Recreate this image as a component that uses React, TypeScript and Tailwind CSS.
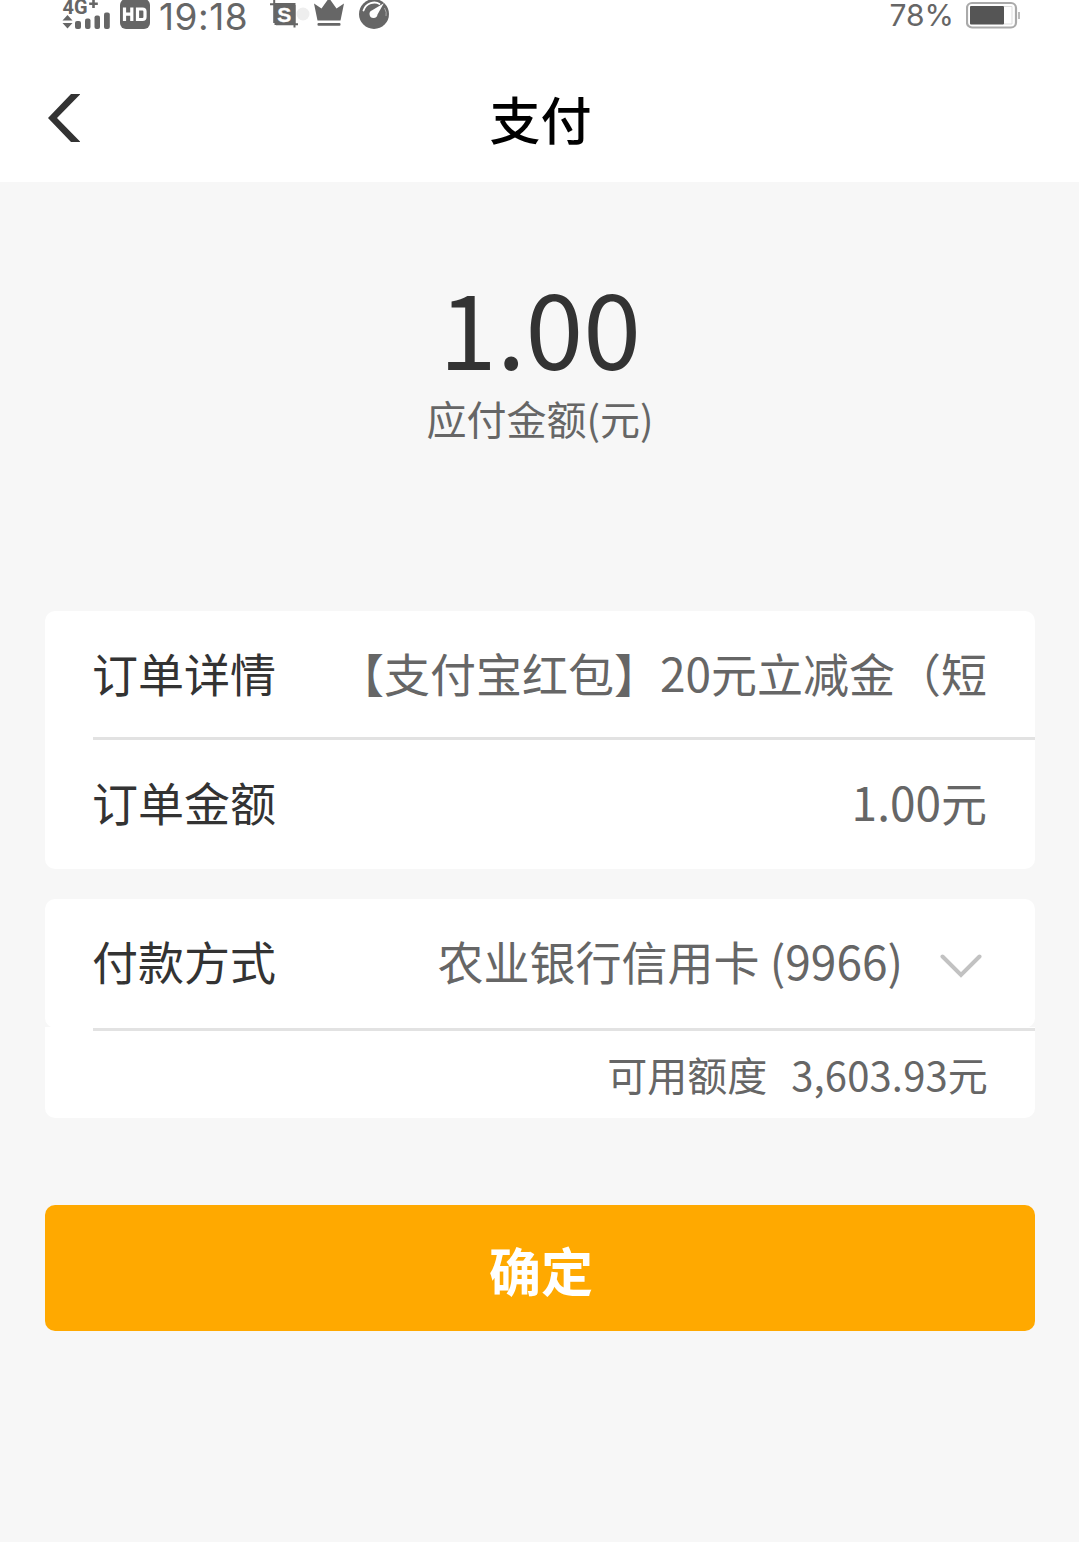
import type { ReactNode } from "react";

function SignalIcon() {
  return (
    <svg className="w-[50px] h-8 shrink-0" viewBox="0 0 50 32" fill="#666">
      <text x="0.5" y="14" fontFamily="Roboto, sans-serif" fontWeight="700" fontSize="20" textLength="25" lengthAdjust="spacingAndGlyphs">4G</text>
      <path d="M30.200 0h2.600v2.500h3v2.400h-3v3h-2.600v-3h-3V2.500h3z" />
      <path d="M0.500 20.500 5.500 15l5 5.500zM0.500 23h10l-5 5.500z" />
      <rect x="13" y="21" width="6" height="8" rx="2" />
      <rect x="23" y="18.500" width="5.500" height="10.500" rx="2" />
      <rect x="32.500" y="15.500" width="5.500" height="13.500" rx="2" />
      <rect x="42" y="12.500" width="5.800" height="16.500" rx="2" />
    </svg>
  );
}

function HdIcon() {
  return (
    <svg className="ml-2 w-[30px] h-8 shrink-0" viewBox="0 0 30 32">
      <rect y="-1" width="30" height="30" rx="6" fill="#666" />
      <path d="M4.500 7.500v13.500M11.800 7.500v13.500M4.500 14.200h7.300M17.500 9h5q2.500 0 2.500 2.500v5.500q0 2.500-2.500 2.500h-5z" fill="none" stroke="#fff" strokeWidth="3.200" />
    </svg>
  );
}

function StatusIcons() {
  return (
    <svg className="ml-[22px] w-[122px] h-8 shrink-0" viewBox="0 0 122 32">
      <circle cx="33" cy="14" r="6.500" fill="#eee" />
      <path d="M4.500 3h21v22H4.500z" fill="#666" />
      <path d="M-1 4.200h24M4.200 0v23M6 24.300h22M24.500 5v22.500" fill="none" stroke="#666" strokeWidth="2" />
      <text x="14.300" y="21.500" textAnchor="middle" fill="#fff" stroke="#fff" strokeWidth="0.300" fontFamily="Liberation Sans, sans-serif" fontWeight="700" fontSize="21">S</text>
      <path d="M44 3.500 51.500 8.500 59 -2 66.500 8.500 74 3.500 70.500 20.500H47.500z" fill="#666" />
      <rect x="47.500" y="23" width="23" height="2.800" rx="1" fill="#666" />
      <circle cx="104" cy="14" r="15" fill="#666" />
      <path d="M93.500 10.500C96 2.500 105 1 109.500 4" fill="none" stroke="#fff" strokeWidth="1.800" strokeLinecap="round" />
      <path d="M113.800 3.200 107.500 14.500a4 4 0 1 1-5.300-4.200z" fill="#fff" />
      <path d="M114.500 8q2.500 4.500 1.500 8" fill="none" stroke="#aaa" strokeWidth="1" />
    </svg>
  );
}

function BatteryIcon() {
  return (
    <svg className="w-14 h-8 shrink-0" viewBox="0 0 56 32">
      <rect x="1" y="3" width="49" height="24.500" rx="5" fill="#fff" stroke="#aaa" strokeWidth="2.200" />
      <rect x="4" y="6" width="34" height="18.500" rx="1" fill="#555" />
      <path d="M38 6.500h8v17.500h-8" fill="none" stroke="#ddd" />
      <path d="M53 12v7" stroke="#bbb" strokeWidth="2" />
    </svg>
  );
}

function Row({ label, children }: { label: string; children: ReactNode }) {
  return (
    <div className="flex h-[126px] items-center justify-between pb-[4px] pl-[47px] pr-[48px] text-[46px] leading-[66px] whitespace-nowrap">
      <span className="text-[#333]">{label}</span>
      <div className="flex items-center text-[#666]">{children}</div>
    </div>
  );
}

export default function App() {
  return (
    <div className="flex h-[1542px] w-[1079px] flex-col overflow-hidden bg-[#f7f7f7] font-['Noto_Sans_CJK_SC',sans-serif]">
      <header className="h-[182px] shrink-0 bg-white">
        <div className="flex h-8 items-start pl-[62px] pr-[57px] text-[#666]">
          <SignalIcon />
          <HdIcon />
          <span className="ml-[9px] w-[89px] font-['Inter',sans-serif] text-[37px] leading-[33px] tracking-[0.5px] whitespace-nowrap">19:18</span>
          <StatusIcons />
          <span className="ml-auto mr-3 font-['Inter',sans-serif] text-[30px] leading-[31px]">78%</span>
          <BatteryIcon />
        </div>
        <div className="grid h-[150px] grid-cols-[1fr_auto_1fr] items-start">
          <button aria-label="返回" className="mt-[62px] ml-12 w-8">
            <svg className="block h-12 w-8" viewBox="0 0 32 48" fill="#333">
              <path d="M23 0h9.500L9 24l23.500 24H23L0 24z" />
            </svg>
          </button>
          <h1 className="mt-12 ml-[2px] text-[51px] leading-[76px] font-medium text-black">支付</h1>
        </div>
      </header>
      <main className="flex flex-col pr-[44px] pl-[45px]">
        <section className="mt-[94px] flex flex-col items-center">
          <div className="text-[104px] leading-[98px] text-[#333]">1.00</div>
          <div className="mt-[14px] text-[40px] leading-[60px] text-[#666]">应付金额(元)</div>
        </section>
        <section className="mt-[163px] rounded-[10px] bg-white">
          <Row label="订单详情">【支付宝红包】20元立减金（短</Row>
          <div className="ml-12 h-[3px] bg-[#e2e2e2]" />
          <div className="pb-[3px]">
            <Row label="订单金额">1.00元</Row>
          </div>
        </section>
        <section className="mt-[30px]">
          <div className="rounded-[10px] bg-white pb-[3px]">
            <Row label="付款方式">
              <span>农业银行信用卡 (9966)</span>
              <svg className="ml-[37px] mr-[5px] mt-3 h-6 w-[42px]" viewBox="0 0 42 24" fill="none" stroke="#c2c2c2" strokeWidth="4" strokeLinecap="round">
                <path d="M2.500 2.500 21 21 39.500 2.500" />
              </svg>
            </Row>
          </div>
          <div className="-mt-px rounded-b-[10px] bg-white pt-px">
            <div className="ml-12 h-[3px] bg-[#e2e2e2]" />
            <div className="flex h-[87px] items-center justify-end pr-[47px] pb-[2px] text-[40px] text-[#666]">
              <span>可用额度</span>
              <span className="ml-6 tracking-[0.15px]">3,603.93元</span>
            </div>
          </div>
        </section>
        <button className="mt-[87px] h-[126px] rounded-[10px] bg-[#ffa900] pt-[4px] pl-[2px] text-[52px] leading-[76px] font-bold text-white">确定</button>
      </main>
    </div>
  );
}
